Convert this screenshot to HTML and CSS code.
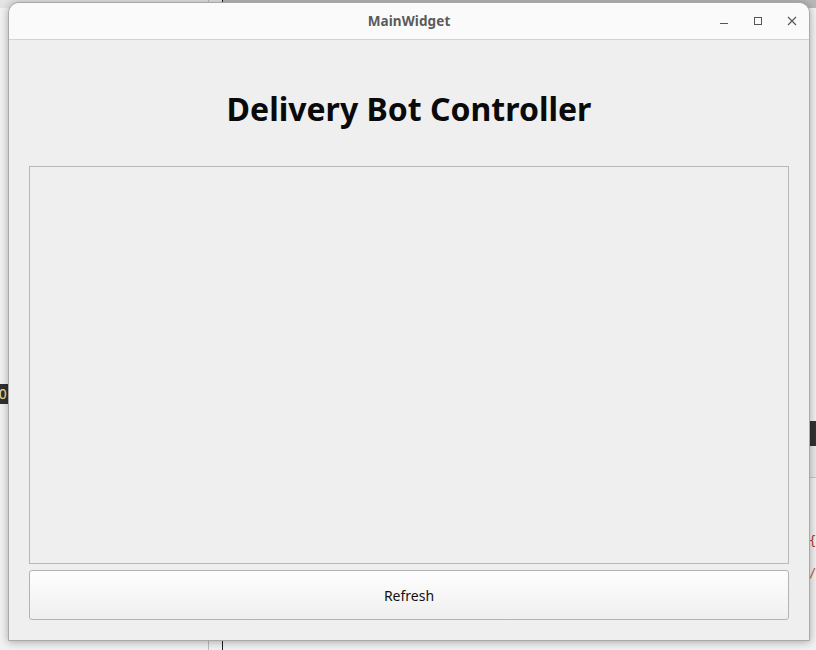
FILE: index.html
```html
<!DOCTYPE html>
<html>
<head>
<meta charset="utf-8">
<title>MainWidget</title>
<link rel="stylesheet" href="styles.css">
</head>
<body>
<div class="desktop">
  <div class="bg-top-left"></div>
  <div class="bg-top-right"></div>
  <div class="bg-vline bg-vline-dark"></div>
  <div class="bg-vline bg-vline-light"></div>
  <div class="bg-left-tab"><span>O</span></div>
  <div class="bg-right-strip"></div>
  <div class="bg-right-gray"></div>
  <div class="bg-code bg-code-1">{</div>
  <div class="bg-code bg-code-2">/</div>

  <div class="window">
    <div class="titlebar">
      <div class="tb-spacer"></div>
      <div class="tb-title">MainWidget</div>
      <div class="tb-controls">
        <span class="ctl">
          <svg width="10" height="10" viewBox="0 0 10 10"><path d="M1 7.5H9" stroke="#555" stroke-width="1" fill="none"/></svg>
        </span>
        <span class="ctl">
          <svg width="10" height="10" viewBox="0 0 10 10"><rect x="1.5" y="1.5" width="7" height="7" stroke="#555" stroke-width="1" fill="none"/></svg>
        </span>
        <span class="ctl">
          <svg width="10" height="10" viewBox="0 0 10 10"><path d="M1 1L9 9M9 1L1 9" stroke="#555" stroke-width="1.1" fill="none"/></svg>
        </span>
      </div>
    </div>
    <div class="content">
      <div class="heading-area">
        <h1 class="heading">Delivery Bot Controller</h1>
      </div>
      <div class="panel"></div>
      <button class="refresh">Refresh</button>
    </div>
  </div>
</div>
</body>
</html>
```

FILE: styles.css
```css
html, body {
  margin: 0;
  padding: 0;
}
body {
  width: 816px;
  height: 650px;
  overflow: hidden;
  background: #f6f6f6;
  font-family: "Noto Sans", "Open Sans", "DejaVu Sans", sans-serif;
}
.desktop {
  position: relative;
  width: 816px;
  height: 650px;
  overflow: hidden;
  background: #f2f2f2;
}
.bg-top-left {
  position: absolute;
  left: 0; top: 0;
  width: 222px; height: 8px;
  background: #e4e4e4;
}
.bg-top-right {
  position: absolute;
  left: 223px; top: 0;
  width: 593px; height: 8px;
  background: #b8b8b8;
}
.bg-vline {
  position: absolute;
  top: 0;
  width: 1px;
  height: 650px;
}
.bg-vline-dark {
  left: 222px;
  background: #1e1e1e;
}
.bg-vline-light {
  left: 208px;
  background: #bdbdbd;
}
.bg-left-tab {
  position: absolute;
  left: -10px; top: 384px;
  width: 18px; height: 20px;
  background: #303030;
  color: #e8d8a0;
  font-size: 14px;
  line-height: 20px;
  text-align: right;
  font-family: "DejaVu Sans Mono", monospace;
}
.bg-left-tab span {
  margin-right: 1px;
}
.bg-right-strip {
  position: absolute;
  left: 800px; top: 421px;
  width: 16px; height: 25px;
  background: #333;
}
.bg-right-gray {
  position: absolute;
  left: 800px; top: 446px;
  width: 16px; height: 31px;
  background: #e9e9e9;
  border-bottom: 1px solid #c8c8c8;
}
.bg-code {
  position: absolute;
  left: 809px;
  font-family: "DejaVu Sans Mono", monospace;
  font-size: 12px;
  line-height: 14px;
}
.bg-code-1 { top: 534px; color: #b0302a; }
.bg-code-2 { top: 566px; color: #c05020; }

.window {
  position: absolute;
  left: 8px;
  top: 2px;
  width: 800px;
  height: 637px;
  border: 1px solid #a9a9a9;
  border-radius: 11px 11px 0 0;
  background: #efefef;
  box-shadow: 0 1px 9px rgba(0, 0, 0, 0.32);
  display: flex;
  flex-direction: column;
  overflow: hidden;
}
.titlebar {
  height: 36px;
  flex: 0 0 36px;
  background: #fafafa;
  border-bottom: 1px solid #d3d3d3;
  display: grid;
  grid-template-columns: 1fr auto 1fr;
  align-items: center;
}
.tb-title {
  font-family: "Noto Sans", "Open Sans", sans-serif;
  font-weight: bold;
  font-size: 13.5px;
  color: #5a5a5a;
  letter-spacing: 0.1px;
}
.tb-controls {
  display: flex;
  justify-content: flex-end;
  align-items: center;
  gap: 10px;
  padding-right: 5px;
}
.ctl {
  width: 24px;
  height: 24px;
  display: flex;
  align-items: center;
  justify-content: center;
}
.ctl svg {
  display: block;
}
.content {
  flex: 1;
  display: flex;
  flex-direction: column;
  padding: 0 20px 20px 20px;
}
.heading-area {
  height: 126px;
  flex: 0 0 126px;
  box-sizing: border-box;
  padding-top: 48px;
  text-align: center;
}
.heading {
  margin: 0;
  font-family: "Noto Sans", "Open Sans", sans-serif;
  font-weight: bold;
  font-size: 32px;
  line-height: 42px;
  color: #0a0a0a;
}
.panel {
  height: 396px;
  flex: 0 0 396px;
  border: 1px solid #b8b8b8;
  background: #efefef;
}
.refresh {
  margin-top: 6px;
  height: 50px;
  flex: 0 0 50px;
  border: 1px solid #b3b3b3;
  border-radius: 3px;
  background: linear-gradient(#fefefe, #efefef);
  font-family: "Noto Sans", "Open Sans", sans-serif;
  font-size: 14px;
  color: #111;
  padding: 0;
}
```
